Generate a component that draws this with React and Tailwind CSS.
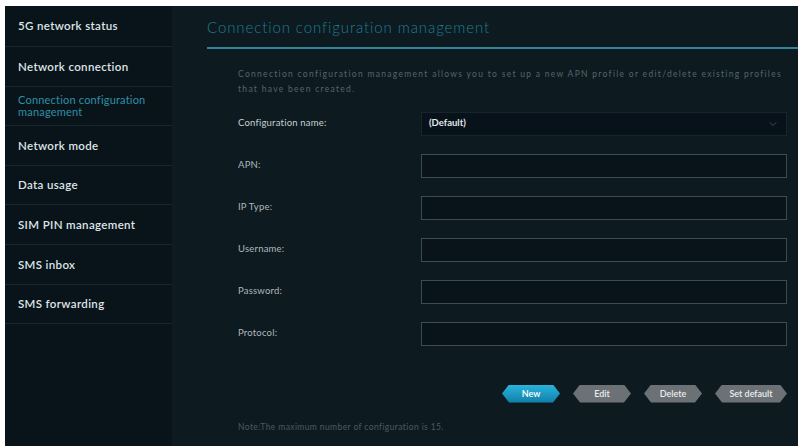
import { ChevronDown } from 'lucide-react';

const menu = [
  { label: '5G network status' },
  { label: 'Network connection' },
  { label: 'Connection configuration management', active: true },
  { label: 'Network mode' },
  { label: 'Data usage' },
  { label: 'SIM PIN management' },
  { label: 'SMS inbox' },
  { label: 'SMS forwarding' },
];

const fields = ['APN:', 'IP Type:', 'Username:', 'Password:', 'Protocol:'];

const hex =
  '[clip-path:polygon(7px_0,calc(100%-7px)_0,100%_50%,calc(100%-7px)_100%,7px_100%,0_50%)]';

const App = () => {
  return (
    <div className="h-[448px] w-[798px] overflow-hidden bg-white pt-[6px] pl-[5px] pb-[2px] font-['Lato','Liberation_Sans',sans-serif]">
      <div className="flex h-full w-full">
        {/* Sidebar */}
        <aside className="flex w-[167px] shrink-0 flex-col bg-[#09141a]">
          {menu.map((item, i) => (
            <div
              key={item.label}
              className={`flex items-center border-b border-[#1a272d] px-[13px] ${i === 0 ? 'h-[41px]' : 'h-[39.6px]'}`}
            >
              <span
                className={
                  item.active
                    ? 'text-[11px] leading-[12px] tracking-[0.2px] text-[#2f8fa6]'
                    : 'text-[11.5px] font-semibold tracking-[0.35px] text-[#dfe5e8]'
                }
              >
                {item.label}
              </span>
            </div>
          ))}
        </aside>

        {/* Main panel */}
        <main className="flex min-w-0 flex-1 flex-col bg-[#0d1a20] pl-[35px]">
          <div className="border-b-2 border-[#2c8599] pt-[10px] pb-[8px]">
            <h1 className="text-[15px] font-light tracking-[0.9px] text-[#1f7d93]">
              Connection configuration management
            </h1>
          </div>

          <div className="flex flex-1 flex-col pr-[11px] pl-[31px]">
            <p className="mt-[18px] text-[8.5px] leading-[15px] tracking-[1.3px] whitespace-nowrap text-[#56656c]">
              Connection configuration management allows you to set up a new APN profile or
              edit/delete existing profiles
              <br />
              that have been created.
            </p>

            <div className="mt-[15px] flex flex-col gap-[18px]">
              <div className="flex items-center">
                <span className="w-[183px] text-[9.5px] tracking-[0.2px] text-[#c7cfd3]">
                  Configuration name:
                </span>
                <div className="flex h-[24px] flex-1 items-center justify-between border border-[#16242b] bg-[#08121a] px-[7px]">
                  <span className="text-[9.5px] font-bold text-[#e3e8ea]">(Default)</span>
                  <ChevronDown className="h-3 w-3 text-[#4a5a62]" strokeWidth={1.5} />
                </div>
              </div>
              {fields.map((f) => (
                <div key={f} className="flex items-center">
                  <span className="w-[183px] text-[9.5px] tracking-[0.2px] text-[#aeb8bd]">{f}</span>
                  <div className="h-[24px] flex-1 border border-[#3d4c53] bg-[#08131a]" />
                </div>
              ))}
            </div>

            <div className="mt-[39px] flex justify-end gap-[13px]">
              <button
                type="button"
                className={`h-[18px] w-[58px] bg-gradient-to-b from-[#2ab4dc] to-[#0f7fa8] text-[9px] font-semibold text-white ${hex}`}
              >
                New
              </button>
              <button
                type="button"
                className={`h-[18px] w-[58px] bg-[#6b7175] text-[9px] font-semibold text-[#e9ecee] ${hex}`}
              >
                Edit
              </button>
              <button
                type="button"
                className={`h-[18px] w-[58px] bg-[#6b7175] text-[9px] font-semibold text-[#e9ecee] ${hex}`}
              >
                Delete
              </button>
              <button
                type="button"
                className={`h-[18px] w-[72px] bg-[#6b7175] text-[9px] font-semibold text-[#e9ecee] ${hex}`}
              >
                Set default
              </button>
            </div>

            <p className="mt-[18px] text-[8.5px] tracking-[0.4px] text-[#4c5a61]">
              Note:The maximum number of configuration is 15.
            </p>
          </div>
        </main>
      </div>
    </div>
  );
};

export default App;
